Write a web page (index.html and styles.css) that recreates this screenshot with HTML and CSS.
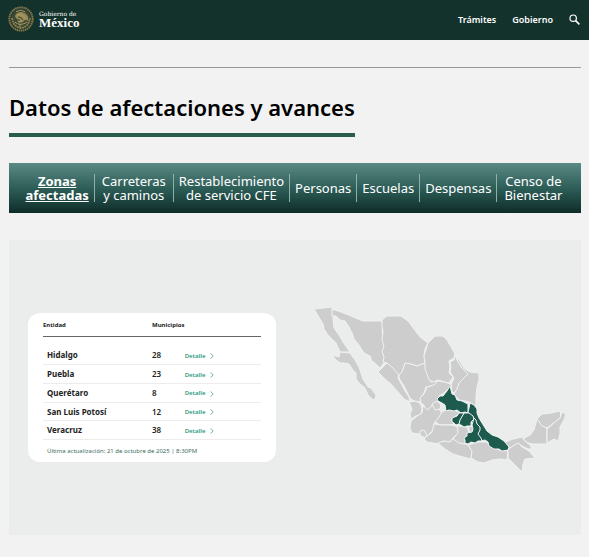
FILE: index.html
```html
<!DOCTYPE html>
<html lang="es">
<head>
  <meta charset="UTF-8">
  <meta name="viewport" content="width=device-width, initial-scale=1.0">
  <title>Datos de afectaciones y avances</title>
  <link rel="stylesheet" href="styles.css">
</head>
<body>
  <header class="topbar">
    <a class="brand" href="#">
      <svg class="seal" viewBox="0 0 26 26" aria-hidden="true">
        <circle cx="13" cy="13" r="11.6" fill="none" stroke="#84764b" stroke-width="2" stroke-dasharray="1.6 .5"/>
        <circle cx="13" cy="13" r="10" fill="#3b4a33"/>
        <path d="M4 12c1 7 5 10 9 10s8-3 9-10" fill="none" stroke="#8c7d4d" stroke-width="1.8" stroke-dasharray="2 .6"/>
        <path d="M7 10c2-4 6-5 9-3 3 1 5 4 4 8-2-2-4-1-5 1-2 1-5 1-6-1 2 0 3-1 3-2-2 1-4 0-5-3z" fill="#9a8a57"/>
        <path d="M9 9c3-1 6 0 8 3M8 6c3-2 6-2 9 0M7 16c3 3 8 3 12 0M12 18v3" fill="none" stroke="#b09c66" stroke-width="1"/>
        <path d="M10 11c2 0 4 1 5 3" fill="none" stroke="#2b3f2f" stroke-width="1"/>
      </svg>
      <span class="brand-name">
        <span class="brand-small">Gobierno de</span>
        <span class="brand-big">México</span>
      </span>
    </a>
    <nav class="top-links">
      <a href="#">Trámites</a>
      <a href="#">Gobierno</a>
      <button class="search" type="button" aria-label="Buscar">
        <svg viewBox="0 0 10 10" aria-hidden="true">
          <circle cx="3.8" cy="3.8" r="2.9" fill="none" stroke="currentColor" stroke-width="1.1"/>
          <path d="M6 6l3.4 3.4" stroke="currentColor" stroke-width="1.4"/>
        </svg>
      </button>
    </nav>
  </header>

  <main class="content">
    <hr class="rule">
    <h1 class="title">Datos de afectaciones y avances</h1>

    <nav class="tabs">
      <a class="active" href="#">Zonas<br>afectadas</a>
      <a class="roomy" href="#">Carreteras<br>y caminos</a>
      <a href="#">Restablecimiento<br>de servicio CFE</a>
      <a href="#">Personas</a>
      <a href="#">Escuelas</a>
      <a href="#">Despensas</a>
      <a class="roomy" href="#">Censo de<br>Bienestar</a>
    </nav>

    <section class="panel">
      <div class="card">
        <table class="zones">
          <thead>
            <tr>
              <th class="col-name">Entidad</th>
              <th class="col-count">Municipios</th>
              <th></th>
            </tr>
          </thead>
          <tbody>
            <tr class="spacer"><td colspan="3"></td></tr>
            <tr>
              <td class="name">Hidalgo</td>
              <td class="count">28</td>
              <td><a class="detail" href="#">Detalle <svg viewBox="0 0 4 6"><path d="M.6.4L3.2 3 .6 5.6"/></svg></a></td>
            </tr>
            <tr>
              <td class="name">Puebla</td>
              <td class="count">23</td>
              <td><a class="detail" href="#">Detalle <svg viewBox="0 0 4 6"><path d="M.6.4L3.2 3 .6 5.6"/></svg></a></td>
            </tr>
            <tr>
              <td class="name">Querétaro</td>
              <td class="count">8</td>
              <td><a class="detail" href="#">Detalle <svg viewBox="0 0 4 6"><path d="M.6.4L3.2 3 .6 5.6"/></svg></a></td>
            </tr>
            <tr>
              <td class="name">San Luis Potosí</td>
              <td class="count">12</td>
              <td><a class="detail" href="#">Detalle <svg viewBox="0 0 4 6"><path d="M.6.4L3.2 3 .6 5.6"/></svg></a></td>
            </tr>
            <tr>
              <td class="name">Veracruz</td>
              <td class="count">38</td>
              <td><a class="detail" href="#">Detalle <svg viewBox="0 0 4 6"><path d="M.6.4L3.2 3 .6 5.6"/></svg></a></td>
            </tr>
          </tbody>
        </table>
        <p class="updated">Última actualización: 21 de octubre de 2025 | 8:30PM</p>
      </div>

      <svg class="map" viewBox="312 302 256 172" role="img" aria-label="Mapa de México">
        <!-- noroeste -->
        <path d="M314 309l18-2 1 11 1 10 7 10 2 4 7 10-10 0-4-9-8-8-4-6-1-5z"/>
        <path d="M340 352l10 1 5 7 4 7 2 6 2 6 5 8 3 1 5 7-1 5-3-1-4-4-3-7-5-4-4-5 0-6-3-3-4-6-5-1-4 0-4-3-4-5 7 2z"/>
        <path d="M332 309l9 3 10 4 12 5 19 0 1 5-1 4 1 8 2 6-2 8 2 6-1 5-4 5-4-4-4-3-2-5-6-3-5-8-5-6-2-6-3-6-4-6-5-1-4-4-4 0z"/>
        <path d="M382 320l5-4 14 0 7 5 9 12 3 4 8 6-3 6-1 6 1 8-8 3-6-2-6 0-3 8-3 3-5-4-7-8-4-1 1-5-2-6 2-4-2-8 1-7-1-6z"/>
        <path d="M387 363l5 4 7 8-1 3 5 9 2 4 4 6 1 5-6-3-5-6-8-9-6-5-7-7 4-4z"/>
        <path d="M399 375l3-3 3-9 6 1 6 2 8-3 2 5 1 8 3 6 7-1-3 4-9 2-2 6-3 4-1 5-6-1-4-3-4-8-2-4-5-8z"/>
        <!-- noreste -->
        <path d="M428 343l7-7 8 0 4 4 3 5 5 9-1 4-5 3 1 6-1 6 4 4-4 6-5-1-6-2-5 2-4-2-2-6-2-5 0-6-1-7z"/>
        <path d="M455 355l2 5 5 8 7 5-4 6-5 5-1 7-2 3-5-2-1-7 3-7-4-6 1-5-1-5 4-2z"/>
        <path d="M456 355l5 8 4 6 5 3 9 1 0 7-2 7-1 9 0 10-7-4-4-1-6-1-5-6 3-5 2-6 4-4 5-5-5-5-5-7z"/>
        <path d="M438 381l7 1 5 2 2 2-4 3-4 4-5 3 3 5-4 0-2 4 4 5-5 0-3-5-3 7-4-1-1-6-3-2-1-5 4-4 3-7 7-2z"/>
        <!-- occidente y centro -->
        <path d="M409 402l6-1 5 2 2 5-1 6-5 2-5 3-1-5 2-5z"/>
        <path d="M411 421l6-5 5-3 1-7 5 4 4-5 7 4 4 6-3 4-6 4 1 6-5 4-3 5-4-6-4 2-7-1-2-5z"/>
        <path d="M432 404l5-3 4 4-1 4-5 1z"/>
        <path d="M420 431l4-1 3 5-2 3-5-3z"/>
        <path d="M442 412l4-2 8 0 6 3-7 5 1 6-5 1-9 0-5-3 4-5z"/>
        <path d="M427 436l5-4 2-8 8 1 10 0 6 2 1 6-6 5-3 4-7-1-4 3-12-2-3-3z"/>
        <path d="M438 443l6-2 6 1 3-4 7 4 8 3 4 6-1 8-8-2-10-3-8-5z"/>
        <path d="M457 426l10 1 2 6-3 6-1 5-6-1-6-4 5-6z"/>
        <path d="M468 427l6-1 2 5-6 2z"/>
        <!-- sur y sureste -->
        <path d="M468 445l10-3 8 0 6 4 7 4 9 1-1 9-6-1-9 1-8 3-6-1-7-4 1-7z"/>
        <path d="M508 449l5-4 5-2 4 4 7 4 6 7-10 1-2 5-1 8-7-7-7-7z"/>
        <path d="M505 442l8-3 9-2 3 4 5 4 2 4-4 0-6-3-4-3-5 3-5 3-3-3z"/>
        <path d="M523 439l7-4 4-5 3-11 10 10 0 15-14 0-5-1z"/>
        <path d="M537 419l5-5 9-1 9-2 1 6-6 5-8 6-5-2z"/>
        <path d="M562 412l4 2-2 6-4 7 0 7-2 7-4-2-7 4 0-14 8-7 5-4z"/>
        <!-- zonas afectadas -->
        <g class="affected">
          <path d="M450 386l2 8 3 1 2 5 5 1 6 3 0 9-3-1-4 1-4-3-3 1-5-1-3 1-1-6-3-2-4-2-1-2 3-3 3 0 4-5z"/>
          <path d="M470 403l4 2 3 4 0 4 2 5 3 5 5 8 5 4 6 2 6 4 5 6-1 3-6 1-3-2-5 0-5-3-1-4-3-2-5 1-4-2-1-4 4-3-3-3 1-4-3 1-2-4-3-1 1-5-2-4 1-4z"/>
          <path d="M464 413l5 0 4 3 1 3-3 3 0 4-4 0-3 1-3-2-4-1 3-5z"/>
          <path d="M452 418l5-2 2-3 5 0-4 7-1 4-3 1-2-2-2-1z"/>
          <path d="M472 425l2-7 2 2 1 4 3 3 0 3-2 4 3 4 1 3-4 0-3 2-4-1-3 2-3-1 0-3-1-2 3-2 0-3 5-1 1-3z"/>
        </g>
      </svg>
    </section>
  </main>
</body>
</html>
```

FILE: styles.css
```css
* {
  box-sizing: border-box;
}
body {
  margin: 0;
  background: #f2f2f2;
  color: #000;
  font-family: "Noto Sans", sans-serif;
}
a {
  color: inherit;
  text-decoration: none;
}

/* header */
.topbar {
  display: flex;
  justify-content: space-between;
  align-items: center;
  height: 40px;
  padding: 0 9px 2px 8px;
  background: #13322b;
  color: #fff;
}
.brand {
  display: flex;
  align-items: center;
  gap: 5px;
}
.seal {
  width: 26px;
  height: 26px;
}
.brand-name {
  display: flex;
  flex-direction: column;
}
.brand-small {
  font-family: "DejaVu Serif", serif;
  font-size: 6px;
  line-height: 7px;
}
.brand-big {
  font-family: "Liberation Serif", serif;
  font-size: 13px;
  font-weight: bold;
  line-height: 11px;
}
.top-links {
  display: flex;
  align-items: center;
  gap: 16px;
  font-size: 9px;
  font-weight: 600;
}
.search {
  display: flex;
  padding: 0;
  border: 0;
  background: none;
  color: #fff;
}
.search svg {
  width: 11px;
  height: 11px;
}

/* page */
.content {
  padding: 27px 8px 22px 9px;
}
.rule {
  height: 1px;
  margin: 0;
  border: 0;
  background: #999;
}
.title {
  width: fit-content;
  margin: 23px 0 26px;
  padding-bottom: 10px;
  border-bottom: 4px solid #2a5c4e;
  font-size: 22px;
  font-weight: 600;
  line-height: 32px;
}

/* tabs */
.tabs {
  display: flex;
  justify-content: center;
  padding: 11px 10px;
  background: linear-gradient(#5b8983, #2e5e58 50%, #0e2d29);
  color: #fff;
  font-size: 13px;
  line-height: 14px;
  text-align: center;
}
.tabs a {
  display: flex;
  align-items: center;
  padding: 0 5px;
}
.tabs a + a {
  border-left: 1px solid #8fb0aa;
}
.tabs .roomy {
  padding: 0 7px;
}
.tabs .active {
  font-weight: bold;
  text-decoration: underline;
}

/* panel */
.panel {
  display: grid;
  grid-template-columns: 248fr 256fr;
  align-items: center;
  gap: 36px;
  min-height: 295px;
  margin-top: 27px;
  padding: 0 13px 0 19px;
  background: #ebeded;
}
.card {
  padding: 3px 15px 5px;
  border-radius: 12px;
  background: #fff;
}
.map {
  width: 100%;
  fill: #cdcdcd;
  stroke: #f0f2f2;
  stroke-width: 1;
  stroke-linejoin: round;
}
.affected {
  fill: #1e5b4f;
}

/* table */
.zones {
  width: 100%;
  height: 124px;
  border-collapse: collapse;
  color: #222;
  font-size: 8px;
  line-height: 12px;
  text-align: left;
}
.zones th {
  height: 20px;
  padding: 0 0 2px;
  border-bottom: 1px solid #666;
  font-size: 6px;
}
.zones td {
  height: 18px;
  padding: 0;
  border-bottom: 1px solid #ececec;
}
.zones .spacer td {
  height: 10px;
  border: 0;
}
.col-name {
  width: 50%;
}
.col-count {
  width: 15%;
}
.zones .name {
  padding-left: 4px;
  font-weight: bold;
}
.count {
  font-weight: 600;
}
.detail {
  color: #2f9a7c;
  font-size: 6px;
  font-weight: 600;
}
.detail svg {
  width: 4px;
  height: 6px;
  margin-left: 3px;
  vertical-align: middle;
  fill: none;
  stroke: currentColor;
  stroke-width: 0.7;
}
.updated {
  margin: 5px 4px 0;
  color: #3d6b60;
  font-size: 6px;
  line-height: 12px;
}
```
